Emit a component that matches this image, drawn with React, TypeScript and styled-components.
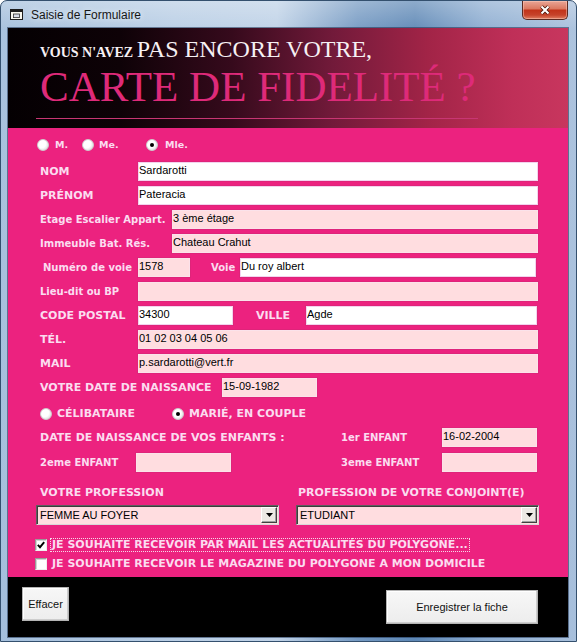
import React from 'react';
import styled, { createGlobalStyle } from 'styled-components';

const LABEL_FONT = `"DejaVu Sans", Verdana, sans-serif`;
const FIELD_FONT = `"Liberation Sans", Arial, sans-serif`;
const SERIF = `"Liberation Serif", "Times New Roman", serif`;

const GlobalStyle = createGlobalStyle`
  html, body { margin: 0; padding: 0; background: #ffffff; }
  body { width: 577px; height: 642px; overflow: hidden; }
  * { box-sizing: border-box; }
`;

const Window = styled.div`
  width: 577px;
  height: 642px;
  border: 1px solid #34506e;
  border-radius: 7px 7px 0 0;
  background:
    linear-gradient(180deg, rgba(255,255,255,0.3) 0px, rgba(255,255,255,0.06) 28px, rgba(255,255,255,0) 100%),
    linear-gradient(90deg, #a4bfdc 0%, #b9cee5 30%, #bfd2e7 48%, #7499c2 62%, #5d87b5 72%, #8dadd1 84%, #a8c0dc 100%);
  display: flex;
  flex-direction: column;
  overflow: hidden;
`;

const TitleBar = styled.div`
  height: 27px;
  flex-shrink: 0;
  display: flex;
  align-items: flex-start;
  padding: 0 8px 0 9px;
`;

const AppIcon = styled.svg`
  margin-top: 8px;
  margin-right: 8px;
  flex-shrink: 0;
`;

const TitleText = styled.span`
  margin-top: 7px;
  font-family: ${FIELD_FONT};
  font-size: 12px;
  line-height: 14px;
  color: #161616;
  text-shadow: 0 0 6px rgba(255, 255, 255, 0.9);
`;

const CloseButton = styled.div`
  margin-left: auto;
  width: 46px;
  height: 19px;
  border: 1px solid #5b2a22;
  border-top: none;
  border-radius: 0 0 5px 5px;
  background: linear-gradient(180deg, #e9a596 0%, #dc7a62 42%, #c2341a 52%, #c6432a 78%, #e07f62 100%);
  box-shadow: inset 0 0 0 1px rgba(255, 210, 195, 0.45);
  display: flex;
  align-items: center;
  justify-content: center;
`;

const Client = styled.div`
  margin: 0 8px 0 7px;
  height: 609px;
  flex-shrink: 0;
  display: flex;
  flex-direction: column;
  box-shadow: 0 0 0 1px rgba(30, 50, 80, 0.55);
`;

const Header = styled.div`
  height: 100px;
  flex-shrink: 0;
  padding: 9px 0 0 32px;
  background: linear-gradient(90deg, #040002 0%, #0e0207 20%, #360a1c 40%, #721a3a 58%, #a22447 75%, #bf2f58 90%, #c8365e 100%);
  display: flex;
  flex-direction: column;
  align-items: flex-start;
`;

const Lead = styled.div`
  height: 24px;
  line-height: 24px;
  font-family: ${SERIF};
  color: #f6f0f3;
  white-space: nowrap;
`;

const LeadSmall = styled.span`
  font-size: 14px;
  font-weight: bold;
`;

const LeadBig = styled.span`
  font-size: 24px;
`;

const Headline = styled.div`
  margin-top: 4px;
  height: 43px;
  font-family: ${SERIF};
  font-size: 43px;
  line-height: 43px;
  color: #de2a79;
  white-space: nowrap;
`;

const Rule = styled.div`
  margin-top: 10px;
  margin-left: -4px;
  width: 442px;
  height: 1px;
  background: #c83673;
`;

const FormPanel = styled.div`
  height: 449px;
  flex-shrink: 0;
  background: #ec227f;
  display: flex;
  flex-direction: column;
`;

const Row = styled.div<{ $top: number; $h?: number; $left?: number }>`
  display: flex;
  align-items: center;
  flex-shrink: 0;
  height: ${(p) => p.$h ?? 19}px;
  margin-top: ${(p) => p.$top}px;
  padding-left: ${(p) => p.$left ?? 32}px;
  padding-right: 30px;
`;

const Label = styled.span<{ $w?: number; $small?: boolean; $indent?: number; $gap?: number }>`
  flex: ${(p) => (p.$w ? `0 0 ${p.$w}px` : '0 0 auto')};
  margin-left: ${(p) => p.$gap ?? 0}px;
  padding-left: ${(p) => p.$indent ?? 0}px;
  padding-top: 1px;
  font-family: ${LABEL_FONT};
  font-weight: bold;
  font-size: ${(p) => (p.$small ? 10 : 11)}px;
  line-height: 14px;
  color: #fbdcef;
  white-space: nowrap;
`;

const Field = styled.div<{ $tone: 'white' | 'pink'; $w?: number; $gap?: number; $end?: number }>`
  flex: ${(p) => (p.$w ? `0 0 ${p.$w}px` : '1 1 auto')};
  height: 19px;
  margin-left: ${(p) => p.$gap ?? 0}px;
  margin-right: ${(p) => p.$end ?? 0}px;
  padding: 1px 0 0 0;
  background: ${(p) => (p.$tone === 'white' ? '#ffffff' : '#ffdde0')};
  border: 1px solid ${(p) => (p.$tone === 'white' ? '#f3d3ee' : '#fbe2ea')};
  box-shadow: 0 0 0 1px rgba(200, 40, 115, 0.35);
  font-family: ${FIELD_FONT};
  font-size: 11px;
  line-height: 13px;
  color: #000;
  white-space: nowrap;
  overflow: hidden;
`;

const Spacer = styled.div<{ $w: number }>`
  flex: 0 0 ${(p) => p.$w}px;
`;

const RadioOption = styled.div<{ $w?: number }>`
  flex: ${(p) => (p.$w ? `0 0 ${p.$w}px` : '0 0 auto')};
  display: flex;
  align-items: center;
`;

const RadioDot = styled.span<{ $checked?: boolean }>`
  width: 12px;
  height: 12px;
  flex-shrink: 0;
  border-radius: 50%;
  border: 1px solid #cfcfcf;
  background: radial-gradient(circle at 38% 38%, #ffffff 0%, #ffffff 45%, #e4e4e4 75%, #bcbcbc 100%);
  display: flex;
  align-items: center;
  justify-content: center;
  &::after {
    content: '';
    display: ${(p) => (p.$checked ? 'block' : 'none')};
    width: 4px;
    height: 4px;
    border-radius: 50%;
    background: #000;
  }
`;

const RadioText = styled.span<{ $size: number; $gap: number }>`
  margin-left: ${(p) => p.$gap}px;
  font-family: ${LABEL_FONT};
  font-weight: bold;
  font-size: ${(p) => p.$size}px;
  line-height: 12px;
  color: #fbdcef;
  white-space: nowrap;
`;

const Select = styled.div<{ $gap?: number }>`
  flex: 0 0 243px;
  height: 20px;
  margin-left: ${(p) => p.$gap ?? 0}px;
  display: flex;
  align-items: center;
  padding: 0 1px 0 3px;
  background: #ffdde0;
  border: 1px solid;
  border-color: #5e5e5e #d8d8d8 #d8d8d8 #5e5e5e;
  box-shadow: inset 1px 1px 0 #3c3c3c;
`;

const SelectText = styled.span`
  flex: 1 1 auto;
  font-family: ${FIELD_FONT};
  font-size: 11px;
  line-height: 13px;
  color: #000;
  white-space: nowrap;
`;

const DropButton = styled.span`
  width: 16px;
  height: 16px;
  flex-shrink: 0;
  background: #ece9e4;
  border: 1px solid;
  border-color: #ffffff #404040 #404040 #ffffff;
  box-shadow: inset -1px -1px 0 #a0a0a0;
  display: flex;
  align-items: center;
  justify-content: center;
`;

const CheckBox = styled.span`
  width: 12px;
  height: 12px;
  flex-shrink: 0;
  background: #ffffff;
  border: 1px solid;
  border-color: #9a9a9a #efefef #efefef #9a9a9a;
  box-shadow: inset 1px 1px 0 #d4d4d4;
  display: flex;
  align-items: center;
  justify-content: center;
`;

const CheckText = styled.span<{ $focused?: boolean }>`
  margin-left: 3px;
  padding: 0 1px;
  border: 1px dotted ${(p) => (p.$focused ? '#f6d9ea' : 'transparent')};
  font-family: ${LABEL_FONT};
  font-weight: bold;
  font-size: 11px;
  line-height: 12px;
  color: #fbdcef;
  white-space: nowrap;
`;

const Footer = styled.div`
  height: 60px;
  flex-shrink: 0;
  background: #000000;
  display: flex;
  justify-content: space-between;
  align-items: flex-start;
  padding: 0 30px 0 14px;
`;

const PushButton = styled.button<{ $w: number; $top: number }>`
  width: ${(p) => p.$w}px;
  height: 34px;
  margin-top: ${(p) => p.$top}px;
  padding: 0;
  border-radius: 0;
  background: linear-gradient(180deg, #f7f7f7 0%, #ededed 100%);
  border: 1px solid #b4b4b4;
  box-shadow: inset -1px -1px 0 #cdcdcd, inset 1px 1px 0 #ffffff;
  font-family: ${FIELD_FONT};
  font-size: 11px;
  color: #111;
  cursor: default;
`;

type Tone = 'white' | 'pink';

const Radio: React.FC<{ label: string; checked?: boolean; w?: number; size: number; gap: number }> = ({
  label,
  checked,
  w,
  size,
  gap,
}) => (
  <RadioOption $w={w}>
    <RadioDot $checked={checked} />
    <RadioText $size={size} $gap={gap}>
      {label}
    </RadioText>
  </RadioOption>
);

const Combo: React.FC<{ value: string; gap?: number }> = ({ value, gap }) => (
  <Select $gap={gap}>
    <SelectText>{value}</SelectText>
    <DropButton>
      <svg width="7" height="4" viewBox="0 0 7 4">
        <polygon points="0,0 7,0 3.5,4" fill="#000" />
      </svg>
    </DropButton>
  </Select>
);

const Check: React.FC<{ label: string; checked?: boolean; focused?: boolean }> = ({ label, checked, focused }) => (
  <>
    <CheckBox>
      {checked && (
        <svg width="8" height="8" viewBox="0 0 8 8">
          <polyline points="0.8,3.8 3,6.2 7.2,1.2" fill="none" stroke="#000" strokeWidth="1.9" />
        </svg>
      )}
    </CheckBox>
    <CheckText $focused={focused}>{label}</CheckText>
  </>
);

const simpleRows: { label: string; value: string; tone: Tone; w: number; small?: boolean }[] = [
  { label: 'NOM', value: 'Sardarotti', tone: 'white', w: 98 },
  { label: 'PRÉNOM', value: 'Pateracia', tone: 'white', w: 98 },
  { label: 'Etage Escalier Appart.', value: '3 ème étage', tone: 'pink', w: 132, small: true },
  { label: 'Immeuble Bat. Rés.', value: 'Chateau Crahut', tone: 'pink', w: 132, small: true },
];

export default function App() {
  return (
    <>
      <GlobalStyle />
      <Window>
        <TitleBar>
          <AppIcon width="13" height="11" viewBox="0 0 13 11">
            <rect x="0.5" y="0.5" width="12" height="10" fill="#f7f6ee" stroke="#1c1c1c" />
            <rect x="1" y="1" width="11" height="2" fill="#1c1c1c" />
            <rect x="3.5" y="5" width="6" height="3.6" fill="#d9dde8" stroke="#333" strokeWidth="0.8" />
          </AppIcon>
          <TitleText>Saisie de Formulaire</TitleText>
          <CloseButton>
            <svg width="12" height="10" viewBox="0 0 12 10">
              <path d="M2.5 1.5 L9.5 8.5 M9.5 1.5 L2.5 8.5" stroke="#4a1508" strokeWidth="3.8" />
              <path d="M2.5 1.5 L9.5 8.5 M9.5 1.5 L2.5 8.5" stroke="#ffffff" strokeWidth="2.1" />
            </svg>
          </CloseButton>
        </TitleBar>

        <Client>
          <Header>
            <Lead>
              <LeadSmall>VOUS N'AVEZ </LeadSmall>
              <LeadBig>PAS ENCORE VOTRE,</LeadBig>
            </Lead>
            <Headline>CARTE DE FIDELITÉ ?</Headline>
            <Rule />
          </Header>

          <FormPanel>
            <Row $top={11} $h={12} $left={29}>
              <Radio label="M." w={45} size={9.5} gap={6} />
              <Radio label="Me." w={64} size={9.5} gap={5} />
              <Radio label="Mle." checked size={9.5} gap={7} />
            </Row>

            {simpleRows.map((r, i) => (
              <Row key={r.label} $top={i === 0 ? 11 : 5}>
                <Label $w={r.w} $small={r.small}>
                  {r.label}
                </Label>
                <Field $tone={r.tone}>{r.value}</Field>
              </Row>
            ))}

            <Row $top={5}>
              <Label $w={98} $small $indent={3}>
                Numéro de voie
              </Label>
              <Field $tone="pink" $w={52}>
                1578
              </Field>
              <Label $w={29} $small $gap={21}>
                Voie
              </Label>
              <Field $tone="white" $end={2}>
                Du roy albert
              </Field>
            </Row>

            <Row $top={5}>
              <Label $w={98} $small>
                Lieu-dit ou BP
              </Label>
              <Field $tone="pink" />
            </Row>

            <Row $top={5}>
              <Label $w={98}>CODE POSTAL</Label>
              <Field $tone="white" $w={95}>
                34300
              </Field>
              <Label $w={50} $gap={23}>
                VILLE
              </Label>
              <Field $tone="white" $end={1}>
                Agde
              </Field>
            </Row>

            <Row $top={5}>
              <Label $w={98}>TÉL.</Label>
              <Field $tone="pink">01 02 03 04 05 06</Field>
            </Row>

            <Row $top={5}>
              <Label $w={98}>MAIL</Label>
              <Field $tone="pink">p.sardarotti@vert.fr</Field>
            </Row>

            <Row $top={5}>
              <Label $w={182}>VOTRE DATE DE NAISSANCE</Label>
              <Field $tone="pink" $w={95}>
                15-09-1982
              </Field>
            </Row>

            <Row $top={11} $h={12}>
              <Radio label="CÉLIBATAIRE" w={132} size={11} gap={5} />
              <Radio label="MARIÉ, EN COUPLE" checked size={11} gap={5} />
            </Row>

            <Row $top={8}>
              <Label $w={301}>DATE DE NAISSANCE DE VOS ENFANTS :</Label>
              <Label $w={101} $small>
                1er ENFANT
              </Label>
              <Field $tone="pink" $w={95}>
                16-02-2004
              </Field>
            </Row>

            <Row $top={6}>
              <Label $w={96} $small>
                2eme ENFANT
              </Label>
              <Field $tone="pink" $w={95} />
              <Spacer $w={110} />
              <Label $w={101} $small>
                3eme ENFANT
              </Label>
              <Field $tone="pink" $w={95} />
            </Row>

            <Row $top={13} $h={14}>
              <Label $w={258}>VOTRE PROFESSION</Label>
              <Label>PROFESSION DE VOTRE CONJOINT(E)</Label>
            </Row>

            <Row $top={6} $h={20} $left={28}>
              <Combo value="FEMME AU FOYER" />
              <Combo value="ETUDIANT" gap={17} />
            </Row>

            <Row $top={14} $h={12} $left={27}>
              <Check label="JE SOUHAITE RECEVOIR PAR MAIL LES ACTUALITÉS DU POLYGONE..." checked focused />
            </Row>
            <Row $top={7} $h={12} $left={27}>
              <Check label="JE SOUHAITE RECEVOIR LE MAGAZINE DU POLYGONE A MON DOMICILE" />
            </Row>
          </FormPanel>

          <Footer>
            <PushButton $w={47} $top={10}>
              Effacer
            </PushButton>
            <PushButton $w={152} $top={13}>
              Enregistrer la fiche
            </PushButton>
          </Footer>
        </Client>
      </Window>
    </>
  );
}
